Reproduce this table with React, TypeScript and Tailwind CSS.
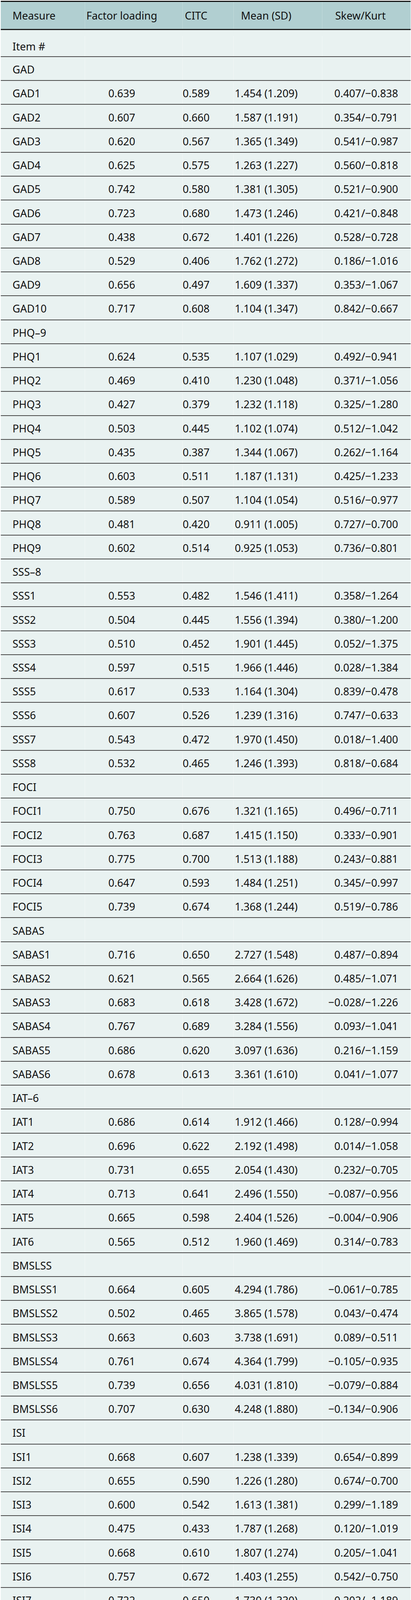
import React from "react";

type Row = [string, string, string, string, string];
type Section = { name: string; rows: Row[] };

const M = "\u2212";

const sections: Section[] = [
  {
    name: "GAD",
    rows: [
      ["GAD1", "0.639", "0.589", "1.454 (1.209)", `0.407/${M}0.838`],
      ["GAD2", "0.607", "0.660", "1.587 (1.191)", `0.354/${M}0.791`],
      ["GAD3", "0.620", "0.567", "1.365 (1.349)", `0.541/${M}0.987`],
      ["GAD4", "0.625", "0.575", "1.263 (1.227)", `0.560/${M}0.818`],
      ["GAD5", "0.742", "0.580", "1.381 (1.305)", `0.521/${M}0.900`],
      ["GAD6", "0.723", "0.680", "1.473 (1.246)", `0.421/${M}0.848`],
      ["GAD7", "0.438", "0.672", "1.401 (1.226)", `0.528/${M}0.728`],
      ["GAD8", "0.529", "0.406", "1.762 (1.272)", `0.186/${M}1.016`],
      ["GAD9", "0.656", "0.497", "1.609 (1.337)", `0.353/${M}1.067`],
      ["GAD10", "0.717", "0.608", "1.104 (1.347)", `0.842/${M}0.667`],
    ],
  },
  {
    name: "PHQ\u20139",
    rows: [
      ["PHQ1", "0.624", "0.535", "1.107 (1.029)", `0.492/${M}0.941`],
      ["PHQ2", "0.469", "0.410", "1.230 (1.048)", `0.371/${M}1.056`],
      ["PHQ3", "0.427", "0.379", "1.232 (1.118)", `0.325/${M}1.280`],
      ["PHQ4", "0.503", "0.445", "1.102 (1.074)", `0.512/${M}1.042`],
      ["PHQ5", "0.435", "0.387", "1.344 (1.067)", `0.262/${M}1.164`],
      ["PHQ6", "0.603", "0.511", "1.187 (1.131)", `0.425/${M}1.233`],
      ["PHQ7", "0.589", "0.507", "1.104 (1.054)", `0.516/${M}0.977`],
      ["PHQ8", "0.481", "0.420", "0.911 (1.005)", `0.727/${M}0.700`],
      ["PHQ9", "0.602", "0.514", "0.925 (1.053)", `0.736/${M}0.801`],
    ],
  },
  {
    name: "SSS\u20138",
    rows: [
      ["SSS1", "0.553", "0.482", "1.546 (1.411)", `0.358/${M}1.264`],
      ["SSS2", "0.504", "0.445", "1.556 (1.394)", `0.380/${M}1.200`],
      ["SSS3", "0.510", "0.452", "1.901 (1.445)", `0.052/${M}1.375`],
      ["SSS4", "0.597", "0.515", "1.966 (1.446)", `0.028/${M}1.384`],
      ["SSS5", "0.617", "0.533", "1.164 (1.304)", `0.839/${M}0.478`],
      ["SSS6", "0.607", "0.526", "1.239 (1.316)", `0.747/${M}0.633`],
      ["SSS7", "0.543", "0.472", "1.970 (1.450)", `0.018/${M}1.400`],
      ["SSS8", "0.532", "0.465", "1.246 (1.393)", `0.818/${M}0.684`],
    ],
  },
  {
    name: "FOCI",
    rows: [
      ["FOCI1", "0.750", "0.676", "1.321 (1.165)", `0.496/${M}0.711`],
      ["FOCI2", "0.763", "0.687", "1.415 (1.150)", `0.333/${M}0.901`],
      ["FOCI3", "0.775", "0.700", "1.513 (1.188)", `0.243/${M}0.881`],
      ["FOCI4", "0.647", "0.593", "1.484 (1.251)", `0.345/${M}0.997`],
      ["FOCI5", "0.739", "0.674", "1.368 (1.244)", `0.519/${M}0.786`],
    ],
  },
  {
    name: "SABAS",
    rows: [
      ["SABAS1", "0.716", "0.650", "2.727 (1.548)", `0.487/${M}0.894`],
      ["SABAS2", "0.621", "0.565", "2.664 (1.626)", `0.485/${M}1.071`],
      ["SABAS3", "0.683", "0.618", "3.428 (1.672)", `${M}0.028/${M}1.226`],
      ["SABAS4", "0.767", "0.689", "3.284 (1.556)", `0.093/${M}1.041`],
      ["SABAS5", "0.686", "0.620", "3.097 (1.636)", `0.216/${M}1.159`],
      ["SABAS6", "0.678", "0.613", "3.361 (1.610)", `0.041/${M}1.077`],
    ],
  },
  {
    name: "IAT\u20136",
    rows: [
      ["IAT1", "0.686", "0.614", "1.912 (1.466)", `0.128/${M}0.994`],
      ["IAT2", "0.696", "0.622", "2.192 (1.498)", `0.014/${M}1.058`],
      ["IAT3", "0.731", "0.655", "2.054 (1.430)", `0.232/${M}0.705`],
      ["IAT4", "0.713", "0.641", "2.496 (1.550)", `${M}0.087/${M}0.956`],
      ["IAT5", "0.665", "0.598", "2.404 (1.526)", `${M}0.004/${M}0.906`],
      ["IAT6", "0.565", "0.512", "1.960 (1.469)", `0.314/${M}0.783`],
    ],
  },
  {
    name: "BMSLSS",
    rows: [
      ["BMSLSS1", "0.664", "0.605", "4.294 (1.786)", `${M}0.061/${M}0.785`],
      ["BMSLSS2", "0.502", "0.465", "3.865 (1.578)", `0.043/${M}0.474`],
      ["BMSLSS3", "0.663", "0.603", "3.738 (1.691)", `0.089/${M}0.511`],
      ["BMSLSS4", "0.761", "0.674", "4.364 (1.799)", `${M}0.105/${M}0.935`],
      ["BMSLSS5", "0.739", "0.656", "4.031 (1.810)", `${M}0.079/${M}0.884`],
      ["BMSLSS6", "0.707", "0.630", "4.248 (1.880)", `${M}0.134/${M}0.906`],
    ],
  },
  {
    name: "ISI",
    rows: [
      ["ISI1", "0.668", "0.607", "1.238 (1.339)", `0.654/${M}0.899`],
      ["ISI2", "0.655", "0.590", "1.226 (1.280)", `0.674/${M}0.700`],
      ["ISI3", "0.600", "0.542", "1.613 (1.381)", `0.299/${M}1.189`],
      ["ISI4", "0.475", "0.433", "1.787 (1.268)", `0.120/${M}1.019`],
      ["ISI5", "0.668", "0.610", "1.807 (1.274)", `0.205/${M}1.041`],
      ["ISI6", "0.757", "0.672", "1.403 (1.255)", `0.542/${M}0.750`],
      ["ISI7", "0.722", "0.650", "1.730 (1.330)", `0.202/${M}1.189`],
    ],
  },
];

const gridCols = "grid grid-cols-[215px_250px_131px_227px_226px]";
const sep = "border-l border-[#f3f8f7]";

function Cells({ cells }: { cells: Row }) {
  return (
    <>
      <div className="pl-[30px] whitespace-nowrap self-center">{cells[0]}</div>
      <div className={`${sep} flex items-center justify-center pr-[62px] pl-[1px]`}>{cells[1]}</div>
      <div className={`${sep} flex items-center justify-center pr-[62px] pl-[1px]`}>{cells[2]}</div>
      <div className={`${sep} flex items-center justify-center pr-[62px] pl-[2px] whitespace-nowrap`}>{cells[3]}</div>
      <div className={`${sep} flex items-center justify-end pr-[31px] pl-[2px] whitespace-nowrap`}>{cells[4]}</div>
    </>
  );
}

export default function App() {
  const allRows: Row[] = [];
  sections.forEach((s) => {
    allRows.push([s.name, "", "", "", ""]);
    s.rows.forEach((r) => allRows.push(r));
  });

  return (
    <div className="bg-white w-[1053px] h-[4130px] pt-[2px] pb-[3px] pl-[2px] pr-[1px] flex flex-col overflow-hidden">
      <div
        className="flex-1 min-h-0 flex flex-col text-[27px] text-[#111] leading-none"
        style={{ fontFamily: '"Noto Sans", "Open Sans", sans-serif' }}
      >
        <div className="shrink-0 border-t-[3px] border-b-[3px] border-t-[#111] border-b-[#1e1e1e] bg-[#b1cfd1]">
          <div className={`${gridCols} h-[69px]`}>
            <div className="pl-[30px] self-center">Measure</div>
            <div className="border-l border-[#c3dbdc] flex items-center justify-center pr-[62px] pl-[1px] whitespace-nowrap">
              Factor loading
            </div>
            <div className="border-l border-[#c3dbdc] flex items-center justify-center pr-[62px] pl-[1px]">
              CITC
            </div>
            <div className="border-l border-[#c3dbdc] flex items-center justify-center pr-[62px] pl-[2px] whitespace-nowrap">
              Mean (SD)
            </div>
            <div className="border-l border-[#c3dbdc] flex items-center justify-center pr-[32px] pl-[2px]">
              Skew/Kurt
            </div>
          </div>
        </div>
        <div className="flex-1 min-h-0 flex flex-col bg-[#e9f2f1] border-b-[3px] border-[#111]">
          <div className={`${gridCols} shrink-0 h-[69px] pt-[15px] border-b-2 border-[#4a4a4a]`}>
            <Cells cells={["Item #", "", "", "", ""]} />
          </div>
          {allRows.map((r, i) => (
            <div
              key={i}
              className={`${gridCols} flex-1 basis-0 min-h-0 pt-[4px] ${
                i === allRows.length - 1 ? "" : "border-b-2 border-[#4a4a4a]"
              }`}
            >
              <Cells cells={r} />
            </div>
          ))}
        </div>
      </div>
    </div>
  );
}
